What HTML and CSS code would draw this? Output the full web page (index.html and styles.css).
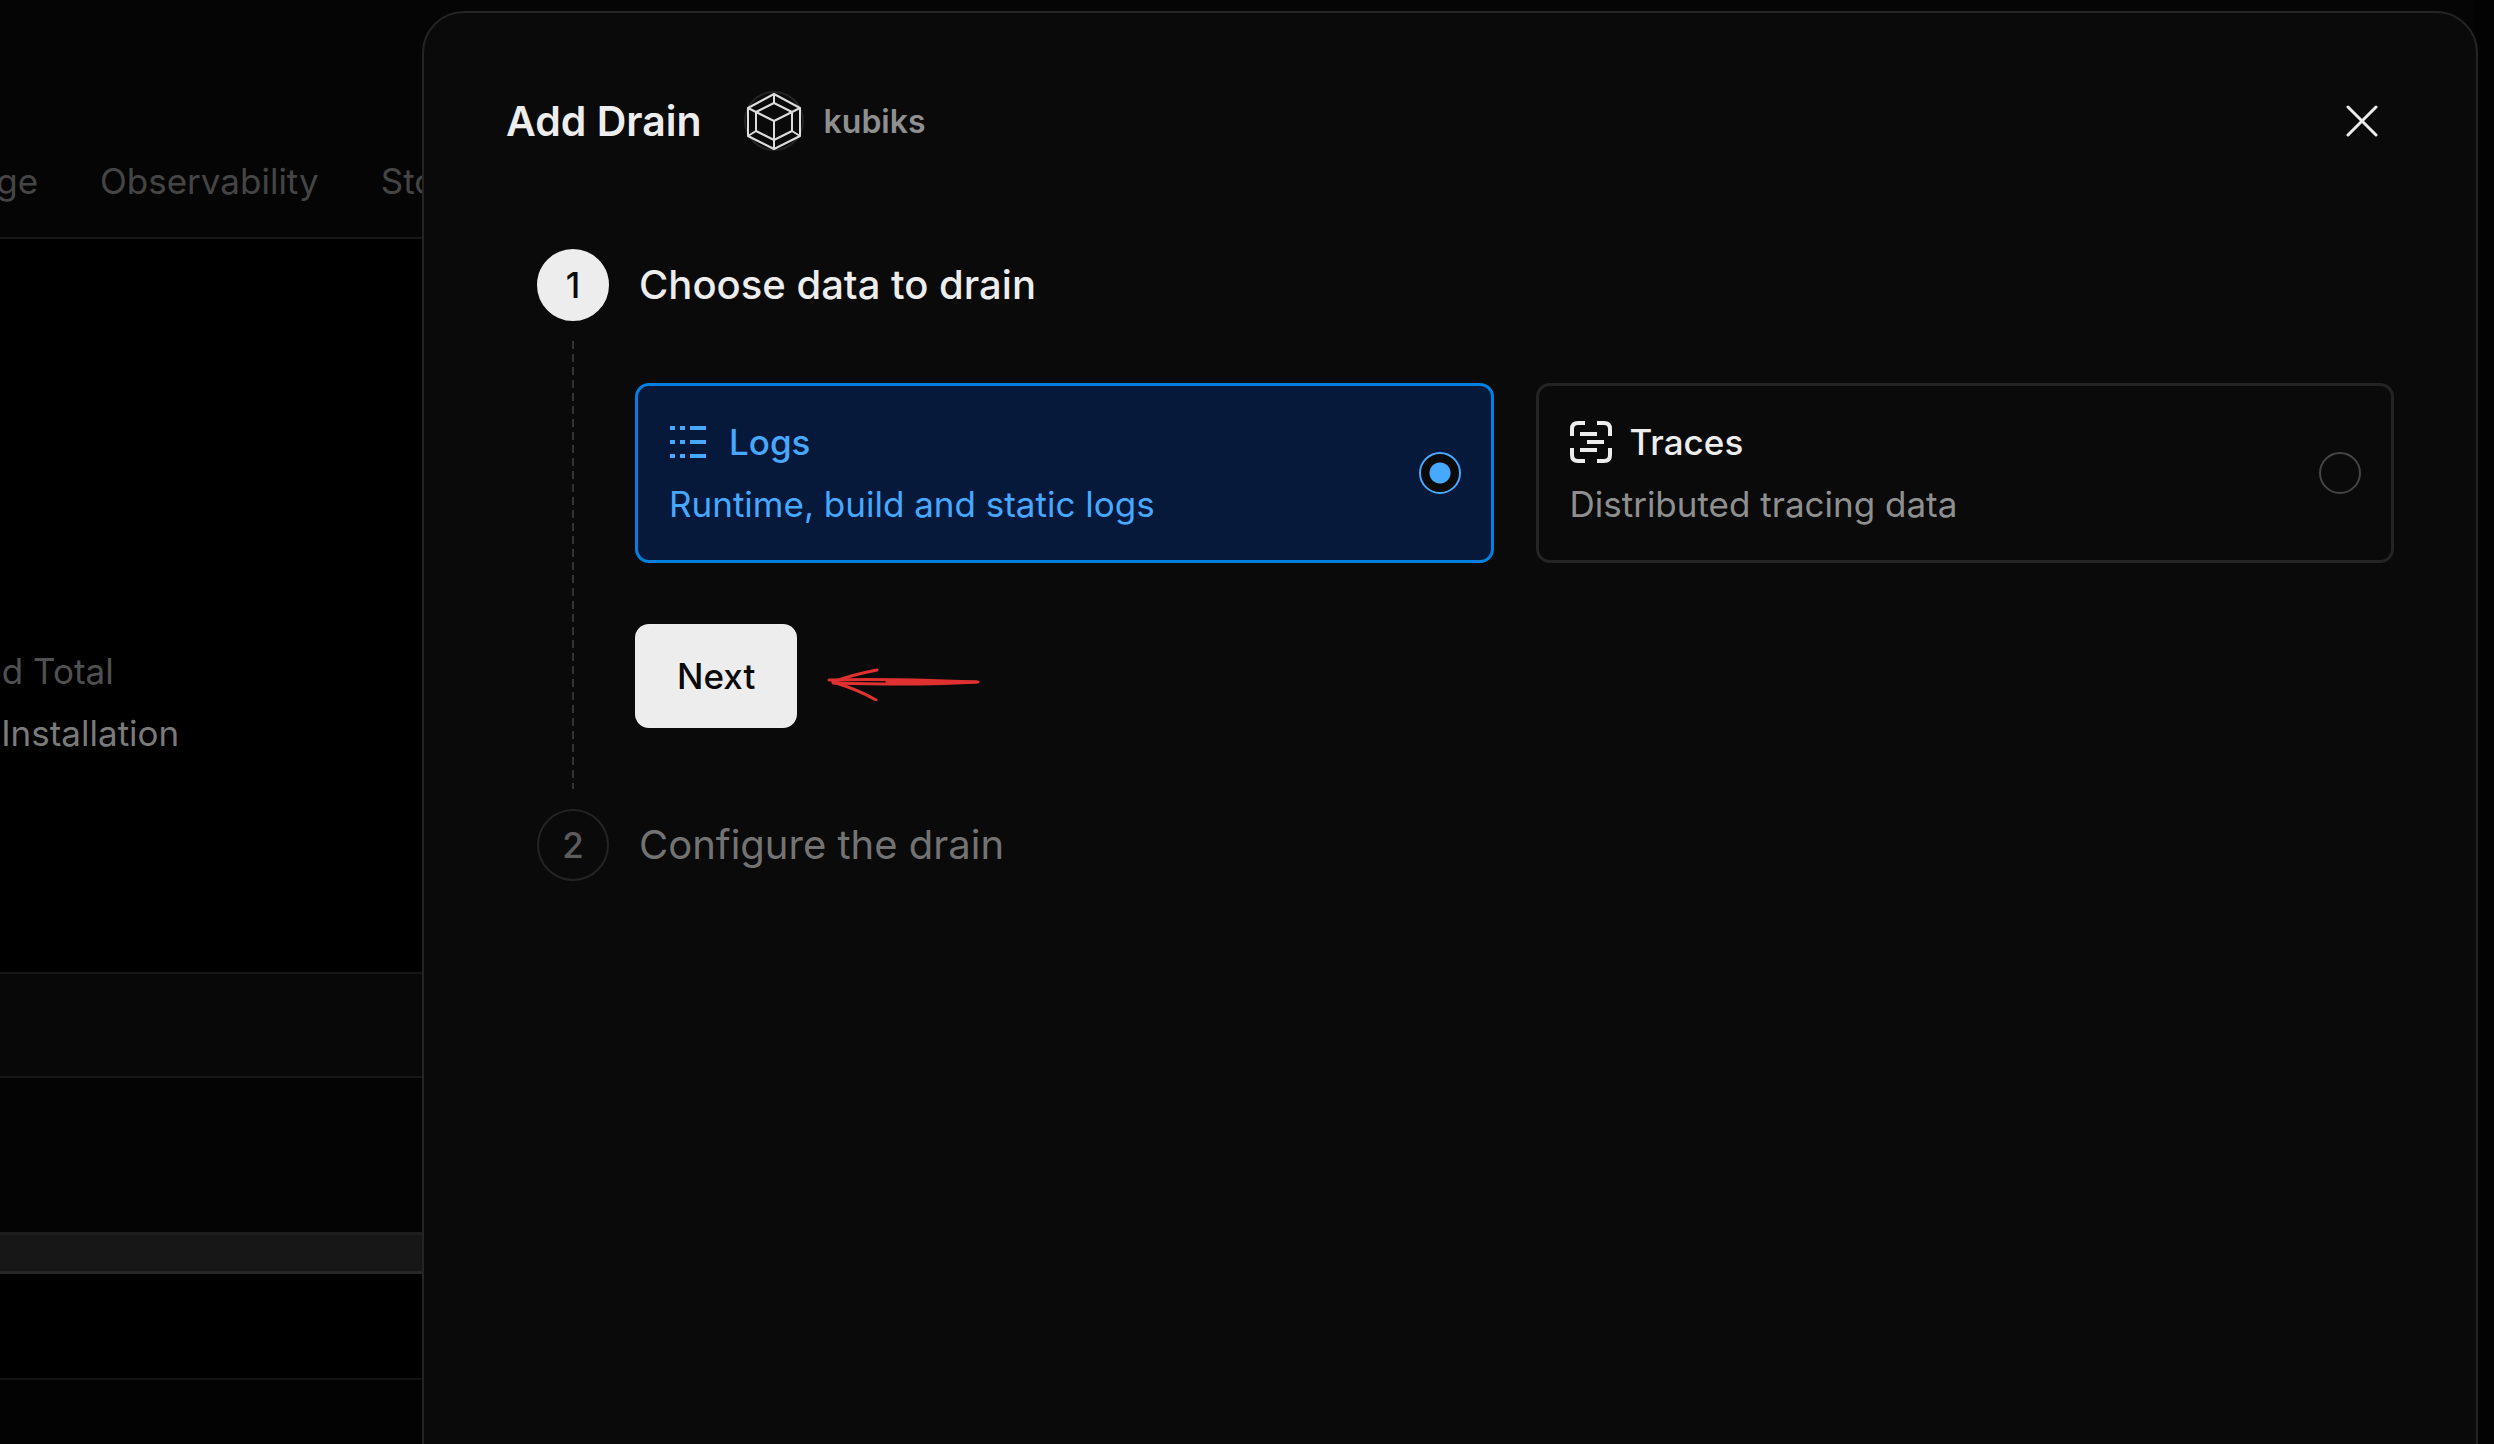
FILE: index.html
```html
<!DOCTYPE html>
<html lang="en">
<head>
    <meta charset="UTF-8">
    <meta name="viewport" content="width=device-width, initial-scale=1.0">
    <title>Add Drain</title>
    <link rel="stylesheet" href="styles.css">
</head>
<body>
    <div class="page">
        <nav class="tabs">
            <a href="#">Usage</a>
            <a href="#">Observability</a>
            <a href="#">Storage</a>
        </nav>
        <section class="summary">
            <p class="summary-label">Period Total</p>
            <p class="summary-value">No Installation</p>
        </section>
        <div class="strip"></div>
        <div class="spacer"></div>
        <div class="band"></div>
        <div class="row"></div>
    </div>

    <div class="drawer" role="dialog" aria-labelledby="drawer-title">
        <header class="drawer-header">
            <h1 id="drawer-title">Add Drain</h1>
            <div class="brand">
                <svg class="logo" viewBox="0 0 60 60" fill="none" stroke="#dcdcdc" stroke-width="2" stroke-linejoin="round" aria-hidden="true">
                    <circle cx="30" cy="30" r="29" stroke="#242424"/>
                    <path d="M30 3 56 17V45L30 58 4 45V17Z"/>
                    <path d="M30 12 48 21V40L30 49 12 40V21Z"/>
                    <path d="M30 3V12M4 17 30 30 56 17M30 30V58M4 45 12 40M56 45 48 40"/>
                </svg>
                <span>kubiks</span>
            </div>
            <button class="close-btn" type="button" aria-label="Close">
                <svg viewBox="0 0 32 32" fill="none" stroke="#ededed" stroke-width="3" stroke-linecap="round">
                    <path d="M2 2 30 30M30 2 2 30"/>
                </svg>
            </button>
        </header>

        <form class="steps">
            <div class="step">
                <div class="step-rail">
                    <span class="step-number active">1</span>
                    <span class="step-line"></span>
                </div>
                <div class="step-body">
                    <h2>Choose data to drain</h2>
                    <div class="options">
                        <label class="option selected">
                            <span class="option-text">
                                <span class="option-title">
                                    <svg class="option-icon" viewBox="0 0 42 42" fill="none" stroke="currentColor" stroke-width="4">
                                        <path d="M1 7H6M11 7H16M21 7H37M1 21H6M11 21H16M21 21H37M1 35H6M11 35H16M21 35H37"/>
                                    </svg>
                                    Logs
                                </span>
                                <span class="option-desc">Runtime, build and static logs</span>
                            </span>
                            <input type="radio" name="data" value="logs" checked>
                        </label>
                        <label class="option">
                            <span class="option-text">
                                <span class="option-title">
                                    <svg class="option-icon" viewBox="0 0 42 42" fill="none" stroke="currentColor" stroke-width="4">
                                        <path d="M2 15V8Q2 2 8 2H15M27 2H34Q40 2 40 8V15M40 27V34Q40 40 34 40H27M15 40H8Q2 40 2 34V27"/>
                                        <path d="M10 13H27M17 21H34M10 29H27"/>
                                    </svg>
                                    Traces
                                </span>
                                <span class="option-desc">Distributed tracing data</span>
                            </span>
                            <input type="radio" name="data" value="traces">
                        </label>
                    </div>
                    <div class="actions">
                        <button class="next-btn" type="button">Next</button>
                        <svg class="arrow" viewBox="0 0 154 36" fill="none" stroke="#e03131" stroke-width="3" stroke-linecap="round" stroke-linejoin="round" aria-hidden="true">
                            <path d="M2 15C40 14 100 15 151 17C100 20 45 19 6 18"/>
                            <path d="M60 17C90 18 120 17 149 17"/>
                            <path d="M50 5Q24 10 6 17Q32 25 49 35"/>
                        </svg>
                    </div>
                </div>
            </div>
            <div class="step">
                <div class="step-rail">
                    <span class="step-number">2</span>
                </div>
                <div class="step-body">
                    <h2 class="muted">Configure the drain</h2>
                </div>
            </div>
        </form>
    </div>
</body>
</html>
```

FILE: styles.css
```css
* {
    box-sizing: border-box;
}
body {
    margin: 0;
    height: 100vh;
    overflow: hidden;
    background-color: #030303;
    color: #ededed;
    font-family: Inter, "Liberation Sans", sans-serif;
    font-size: 35px;
}
h1, h2, p {
    margin: 0;
}
button, input {
    font: inherit;
    margin: 0;
}

/* dimmed page behind the drawer */
.page {
    margin-right: 20px;
    background-color: #000;
}
.tabs {
    display: flex;
    gap: 62px;
    height: 239px;
    padding-top: 156px;
    background-color: #050505;
    border-bottom: 2px solid #171717;
}
.tabs a {
    color: #454545;
    line-height: 50px;
    text-decoration: none;
}
.tabs a:first-child {
    margin-left: -68px;
}
.summary {
    height: 733px;
    padding-top: 401px;
    line-height: 62px;
    white-space: nowrap;
}
.summary-label {
    margin-left: -84px;
    color: #505050;
}
.summary-value {
    margin-left: -56px;
    color: #7a7a7a;
}
.strip {
    height: 106px;
    background-color: #080808;
    border-top: 2px solid #171717;
    border-bottom: 2px solid #171717;
}
.spacer {
    height: 154px;
    background-color: #040404;
}
.band {
    height: 42px;
    background-color: #171717;
    border-top: 3px solid #1e1e1e;
    border-bottom: 3px solid #262626;
}
.row {
    height: 106px;
    border-bottom: 2px solid #121212;
}

.drawer {
    position: fixed;
    top: 11px;
    right: 16px;
    bottom: -2px;
    left: 422px;
    padding: 74px 82px 0;
    background-color: #0a0a0a;
    border: 2px solid #242424;
    border-radius: 42px 42px 0 0;
}
.drawer-header {
    display: flex;
    align-items: center;
    height: 68px;
}
h1 {
    font-size: 41px;
    font-weight: 600;
}
.brand {
    display: flex;
    align-items: center;
    gap: 20px;
    margin-left: 42px;
    color: #8f8f8f;
    font-size: 32px;
    font-weight: 600;
}
.logo {
    width: 60px;
    height: 60px;
}
.close-btn {
    width: 64px;
    height: 64px;
    margin-left: auto;
    padding: 16px;
    background: none;
    border: none;
    cursor: pointer;
}
.close-btn svg {
    display: block;
}

.steps {
    margin-top: 94px;
    padding-left: 31px;
}
.step {
    display: flex;
    gap: 26px;
}
.step-rail {
    display: flex;
    flex-direction: column;
    align-items: center;
}
.step-number {
    width: 72px;
    height: 72px;
    border: 2px solid #242424;
    border-radius: 50%;
    color: #5c5c5c;
    font-weight: 500;
    line-height: 68px;
    text-align: center;
}
.step-number.active {
    background-color: #ededed;
    border-color: #ededed;
    color: #0a0a0a;
}
.step-line {
    flex: 1;
    width: 2px;
    margin: 20px 0;
    background: repeating-linear-gradient(#333 0 8px, transparent 8px 13px);
}
.step-body {
    flex: 1;
}
h2 {
    padding-left: 4px;
    font-size: 40px;
    font-weight: 500;
    line-height: 72px;
}
h2.muted {
    color: #737373;
    font-weight: 400;
}
.options {
    display: grid;
    grid-template-columns: 1fr 1fr;
    gap: 42px;
    margin-top: 62px;
}
.option {
    display: flex;
    align-items: center;
    justify-content: space-between;
    height: 180px;
    padding: 0 30px 0 31px;
    border: 3px solid #242424;
    border-radius: 14px;
    cursor: pointer;
}
.option-text {
    display: flex;
    flex-direction: column;
    line-height: 62px;
}
.option-title {
    display: flex;
    align-items: center;
    gap: 18px;
    font-weight: 500;
}
.option-desc {
    color: #8f8f8f;
}
.option-icon {
    width: 42px;
    height: 42px;
}
.option.selected {
    background-color: #06193a;
    border-color: #0081e0;
}
.option.selected .option-title,
.option.selected .option-desc {
    color: #47a8ff;
}
.option input {
    appearance: none;
    width: 42px;
    height: 42px;
    background-color: #0a0a0a;
    border: 2px solid #454545;
    border-radius: 50%;
}
.option input:checked {
    background: radial-gradient(circle, #47a8ff 10px, #0a0a0a 11px);
    border-color: #47a8ff;
}
.actions {
    display: flex;
    align-items: center;
    gap: 30px;
    margin: 61px 0 81px;
}
.next-btn {
    height: 104px;
    padding: 0 42px;
    background-color: #ededed;
    border: none;
    border-radius: 14px;
    color: #0a0a0a;
    font-weight: 500;
    cursor: pointer;
}
.arrow {
    width: 154px;
    height: 36px;
    margin-top: 14px;
}
```
